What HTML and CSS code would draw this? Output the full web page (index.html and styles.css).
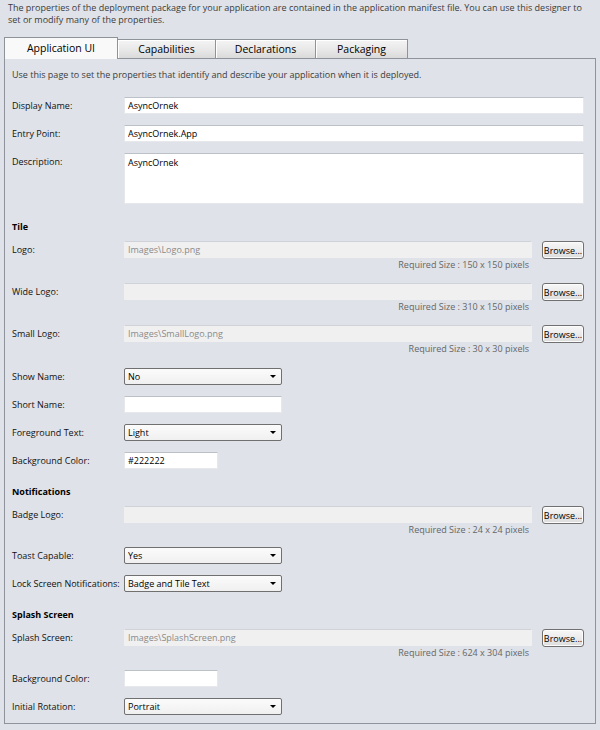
FILE: index.html
```html
<!DOCTYPE html>
<html lang="en">
<head>
    <meta charset="UTF-8">
    <meta name="viewport" content="width=device-width, initial-scale=1.0">
    <title>Package.appxmanifest</title>
    <link rel="stylesheet" href="styles.css">
</head>
<body>
    <p class="intro">The properties of the deployment package for your application are contained in the application manifest file. You can use this designer to set or modify many of the properties.</p>

    <div class="tabs">
        <div class="tab active">Application UI</div>
        <div class="tab tab-caps">Capabilities</div>
        <div class="tab tab-decl">Declarations</div>
        <div class="tab tab-pack">Packaging</div>
    </div>

    <div class="panel">
        <p class="note">Use this page to set the properties that identify and describe your application when it is deployed.</p>

        <div class="field first">
            <label>Display Name:</label>
            <input type="text" class="text wide" value="AsyncOrnek">
        </div>
        <div class="field">
            <label>Entry Point:</label>
            <input type="text" class="text wide" value="AsyncOrnek.App">
        </div>
        <div class="field">
            <label>Description:</label>
            <textarea class="text wide area">AsyncOrnek</textarea>
        </div>

        <h3 class="section">Tile</h3>
        <div class="field file first">
            <label>Logo:</label>
            <div class="picker">
                <div class="picker-line">
                    <input type="text" class="path" value="Images\Logo.png" disabled>
                    <button class="browse">Browse...</button>
                </div>
                <div class="hint">Required Size : 150 x 150 pixels</div>
            </div>
        </div>
        <div class="field file">
            <label>Wide Logo:</label>
            <div class="picker">
                <div class="picker-line">
                    <input type="text" class="path" value="" disabled>
                    <button class="browse">Browse...</button>
                </div>
                <div class="hint">Required Size : 310 x 150 pixels</div>
            </div>
        </div>
        <div class="field file">
            <label>Small Logo:</label>
            <div class="picker">
                <div class="picker-line">
                    <input type="text" class="path" value="Images\SmallLogo.png" disabled>
                    <button class="browse">Browse...</button>
                </div>
                <div class="hint">Required Size : 30 x 30 pixels</div>
            </div>
        </div>
        <div class="field after-file">
            <label>Show Name:</label>
            <span class="select-wrap"><select class="combo"><option>No</option></select></span>
        </div>
        <div class="field">
            <label>Short Name:</label>
            <input type="text" class="text medium" value="">
        </div>
        <div class="field">
            <label>Foreground Text:</label>
            <span class="select-wrap"><select class="combo"><option>Light</option></select></span>
        </div>
        <div class="field">
            <label>Background Color:</label>
            <input type="text" class="text short" value="#222222">
        </div>

        <h3 class="section">Notifications</h3>
        <div class="field file first">
            <label>Badge Logo:</label>
            <div class="picker">
                <div class="picker-line">
                    <input type="text" class="path" value="" disabled>
                    <button class="browse">Browse...</button>
                </div>
                <div class="hint">Required Size : 24 x 24 pixels</div>
            </div>
        </div>
        <div class="field">
            <label>Toast Capable:</label>
            <span class="select-wrap"><select class="combo"><option>Yes</option></select></span>
        </div>
        <div class="field">
            <label>Lock Screen Notifications:</label>
            <span class="select-wrap"><select class="combo"><option>Badge and Tile Text</option></select></span>
        </div>

        <h3 class="section">Splash Screen</h3>
        <div class="field file first">
            <label>Splash Screen:</label>
            <div class="picker">
                <div class="picker-line">
                    <input type="text" class="path" value="Images\SplashScreen.png" disabled>
                    <button class="browse">Browse...</button>
                </div>
                <div class="hint">Required Size : 624 x 304 pixels</div>
            </div>
        </div>
        <div class="field">
            <label>Background Color:</label>
            <input type="text" class="text short" value="">
        </div>
        <div class="field">
            <label>Initial Rotation:</label>
            <span class="select-wrap"><select class="combo"><option>Portrait</option></select></span>
        </div>
    </div>
</body>
</html>
```

FILE: styles.css
```css
body {
    margin: 0;
    background-color: #dfe2e8;
    font-family: "Open Sans", "Noto Sans", sans-serif;
    font-size: 9px;
    color: #111;
}

.intro {
    margin: 0;
    padding: 2px 8px 0 8px;
    line-height: 12px;
    color: #3c3c3c;
}

/* tab strip */
.tabs {
    display: flex;
    align-items: flex-end;
    margin-top: 11px;
    padding-left: 4px;
}

.tab {
    box-sizing: border-box;
    height: 19px;
    margin-right: -1px;
    border: 1px solid #8e9299;
    border-bottom: none;
    background: linear-gradient(#f4f4f4, #e9e9e9 50%, #dadada);
    box-shadow: inset 1px 1px 0 #fff;
    text-align: center;
    line-height: 18px;
    font-size: 10.5px;
    color: #000;
}

.tab.active {
    position: relative;
    z-index: 1;
    width: 114px;
    height: 22px;
    margin-bottom: -1px;
    background: #f9f9f9;
    box-shadow: none;
    line-height: 20px;
}

.tab-caps { width: 99px; }
.tab-decl { width: 101px; }
.tab-pack { width: 93px; }

.panel {
    margin: 0 4px;
    padding: 0 11px 8px 7px;
    border: 1px solid #8f939b;
}

.note {
    margin: 0;
    padding-top: 9px;
    line-height: 14px;
    color: #3c3c3c;
}

/* rows */
.field {
    display: flex;
    align-items: flex-start;
    margin-top: 11px;
}

.field.first {
    margin-top: 15px;
}

.section + .field.first {
    margin-top: 7px;
}

.field.file {
    margin-top: 12px;
}

.field.after-file {
    margin-top: 13px;
}

.field label {
    flex: 0 0 112px;
    line-height: 17px;
    white-space: nowrap;
}

.section {
    margin: 16px 0 0 0;
    font-size: 9px;
    line-height: 14px;
    font-weight: bold;
    color: #000;
}

/* inputs */
.text {
    box-sizing: border-box;
    display: block;
    height: 17px;
    padding: 0 3px;
    border: 1px solid #e6e8ec;
    border-top-color: #bcc0c7;
    background: #fff;
    font-family: inherit;
    font-size: 9px;
    color: #000;
    outline: none;
}

.wide { flex: 1; }
.medium { width: 158px; }
.short { width: 94px; }

.area {
    height: 51px;
    padding-top: 2px;
    resize: none;
}

.picker {
    flex: 1;
}

.picker-line {
    display: flex;
    align-items: flex-start;
    height: 17px;
}

.path {
    box-sizing: border-box;
    flex: 1;
    height: 17px;
    padding: 0 3px;
    border: 1px solid #f0f0f0;
    border-top-color: #cfd2d8;
    background: #f0f0f0;
    font-family: inherit;
    font-size: 9px;
    color: #8a8a8a;
}

.browse {
    box-sizing: border-box;
    width: 42px;
    height: 18px;
    margin-left: 10px;
    padding: 0;
    border: 1px solid #707070;
    border-radius: 3px;
    background: linear-gradient(#f7f7f7, #ebebeb 50%, #dcdcdc);
    box-shadow: inset 0 0 0 1px #fcfcfc;
    font-family: inherit;
    font-size: 9px;
    color: #000;
}

.hint {
    width: calc(100% - 55px);
    text-align: right;
    line-height: 13px;
    color: #666;
}

/* drop downs */
.select-wrap {
    position: relative;
    display: block;
}

.combo {
    box-sizing: border-box;
    display: block;
    width: 158px;
    height: 17px;
    padding: 0 3px;
    border: 1px solid #707070;
    border-radius: 2px;
    background: linear-gradient(#fbfbfb, #f0f0f0);
    font-family: inherit;
    font-size: 9px;
    color: #000;
    appearance: none;
    -webkit-appearance: none;
}

.select-wrap::after {
    content: "";
    position: absolute;
    right: 6px;
    top: 7px;
    border-left: 3px solid transparent;
    border-right: 3px solid transparent;
    border-top: 3px solid #000;
    pointer-events: none;
}
```
